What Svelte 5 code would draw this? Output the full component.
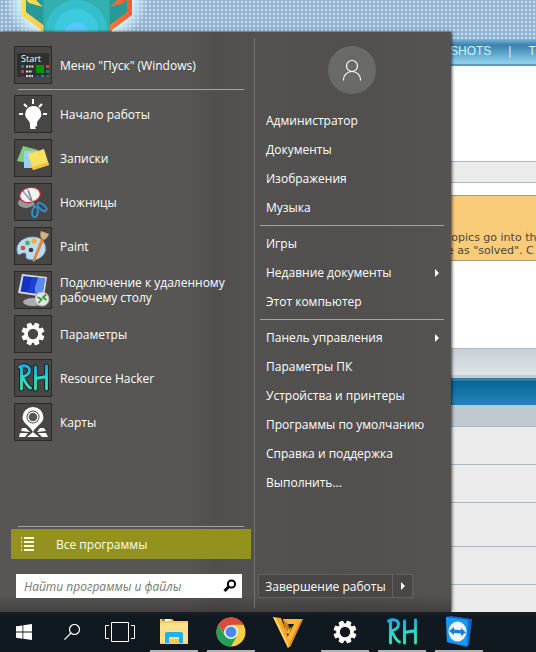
<script>
  const programs = [
    { id: 'tips', label: 'Начало работы' },
    { id: 'notes', label: 'Записки' },
    { id: 'snip', label: 'Ножницы' },
    { id: 'paint', label: 'Paint' },
    { id: 'rdp', label: 'Подключение к удаленному рабочему столу' },
    { id: 'gear', label: 'Параметры' },
    { id: 'rh', label: 'Resource Hacker' },
    { id: 'maps', label: 'Карты' }
  ];
  const places = [
    [{ label: 'Администратор' }, { label: 'Документы' }, { label: 'Изображения' }, { label: 'Музыка' }],
    [{ label: 'Игры' }, { label: 'Недавние документы', sub: true }, { label: 'Этот компьютер' }],
    [
      { label: 'Панель управления', sub: true },
      { label: 'Параметры ПК' },
      { label: 'Устройства и принтеры' },
      { label: 'Программы по умолчанию' },
      { label: 'Справка и поддержка' },
      { label: 'Выполнить...' }
    ]
  ];
  const pinned = [
    { id: 'explorer', name: 'Проводник', open: true },
    { id: 'chrome', name: 'Google Chrome', open: true },
    { id: 'v', name: 'Freemake', open: false },
    { id: 'gear', name: 'Параметры', open: true },
    { id: 'rh', name: 'Resource Hacker', open: true },
    { id: 'tv', name: 'TeamViewer', open: true }
  ];
  const teeth = [22.5, 67.5, 112.5, 157.5, 202.5, 247.5, 292.5, 337.5];
  const rows = ['short', 'short', 'tall', 'short', 'rest'];
  let query = $state('');
</script>

{#snippet icon(id)}
  <svg class="icon" viewBox="0 0 36 36" aria-hidden="true">
    {#if id === 'start'}
      <rect x="2" y="6" width="32" height="24" fill="#303030" />
      <rect x="6" y="18" width="3" height="3" fill="#167a8c" />
      <rect x="6" y="23" width="3" height="3" fill="#c0492f" />
      <rect x="6" y="28" width="3" height="2" fill="#6a1a6c" />
      <path d="M11 19.500h8M11 24.500h6M11 29h7" stroke="#ddd" stroke-width="2" stroke-dasharray="2 .7" />
      <rect x="21" y="18" width="8" height="8" fill="#009500" />
      <rect x="31" y="18" width="3" height="3" fill="#c0492f" />
      <rect x="31" y="23" width="3" height="3" fill="#167a8c" />
      <rect x="21" y="28" width="3" height="2" fill="#234e9c" />
      <rect x="26" y="28" width="3" height="2" fill="#3975c8" />
      <rect x="31" y="28" width="3" height="2" fill="#347838" />
    {:else if id === 'tips'}
      <path d="M18 10a8 8 0 0 0-5 14c1.500 1.500 2 3 2 5v3q0 1 1 1h5l-1-2 2-1v-2l0-1c0-1 .5-2 1.500-3A8 8 0 0 0 18 10z" fill="#fff" />
      <path d="M18 3v5M9 8l3 3M27 8l-3 3M4 18h4M28 18h4" stroke="#fff" stroke-width="2" />
    {:else if id === 'notes'}
      <path d="M8 6l15 4-5 14-16-3z" fill="#7fce7b" />
      <path d="M9 11h12v17H9z" fill="#9dcdf0" />
      <path d="M13 14l16-5 5 16-16 5z" fill="#f9e060" />
      <path d="M18 30l16-5-1-3-16 5z" fill="#eec63c" />
    {:else if id === 'snip'}
      <ellipse cx="11" cy="19" rx="8" ry="5" fill="#999" />
      <ellipse cx="15" cy="11" rx="10.500" ry="7.500" fill="#f3f4f8" stroke="#c9262c" stroke-width="1.300" transform="rotate(-12 15 11)" />
      <path d="M8 7l12 15M13 6l6 17" stroke="#7b8488" stroke-width="1.500" />
      <path d="M9 8l10 13" stroke="#dfe4e6" stroke-width=".8" stroke-dasharray="1 1" />
      <ellipse cx="20" cy="28" rx="2.800" ry="5" fill="none" stroke="#2f8fd0" stroke-width="2" transform="rotate(8 20 28)" />
      <ellipse cx="27" cy="23" rx="2.600" ry="5.500" fill="none" stroke="#2f8fd0" stroke-width="2" transform="rotate(-48 27 23)" />
    {:else if id === 'paint'}
      <path d="M3 26C-1 16 8 9 18 9c10 0 14 8 12 15-3 7-11 9-17 7-4-1 0-5-3-6s-4 2-7 1z" fill="#b9daf0" stroke="#7fb2d6" stroke-width=".8" />
      <circle cx="8" cy="20" r="2.300" fill="#d84a3e" />
      <circle cx="12.500" cy="15" r="2.400" fill="#58b055" />
      <circle cx="19" cy="13" r="2.600" fill="#edb02f" />
      <circle cx="16" cy="22" r="2.300" fill="#343e46" />
      <path d="M26 11l3 1-9 21-2 1 0-3z" fill="#e0872f" />
      <path d="M26 10c-1-3-1-4 0-7l8 3c-1 3-3 5-5 6z" fill="#d6b083" />
    {:else if id === 'rdp'}
      <ellipse cx="18" cy="30" rx="10" ry="4" fill="#aaaeb0" />
      <path d="M7 2l25 3-3 20L3 21z" fill="#d6dade" />
      <path d="M8.500 4l21.500 2.500-2.500 16L5.500 19.500z" fill="#1432c8" />
      <path d="M17 5l13 1.500-2.500 16-7-1z" fill="#5a8cec" />
      <path d="M17 5l6 .7-5 15.500-5-.7z" fill="#2040d0" />
      <circle cx="27" cy="27" r="7" fill="#e3e6e3" stroke="#b0b5b0" />
      <path d="M22.500 25l4 2.500-3 3.500M31 22.500l-3 3 3.500 2.500" fill="none" stroke="#3a9a3a" stroke-width="1.800" />
    {:else if id === 'gear'}
      {#each teeth as a}
        <rect x="15.500" y="6.500" width="5" height="6" rx="1" fill="#fff" transform="rotate({a} 18 18)" />
      {/each}
      <circle cx="18" cy="18" r="7" fill="none" stroke="#fff" stroke-width="3.600" />
    {:else if id === 'rh'}
      <defs>
        <linearGradient id="sea" x1="0" y1="0" x2="0" y2="36" gradientUnits="userSpaceOnUse">
          <stop offset=".1" stop-color="#16a8f0" />
          <stop offset=".5" stop-color="#2cd8cc" />
          <stop offset=".9" stop-color="#48e69a" />
        </linearGradient>
      </defs>
      {#each ['#08262c', 'url(#sea)'] as c, i}
        <path d="M6.500 7v22M4.500 7C9 4.500 14.500 6 14.500 10s-3 6-7.500 7c3 3 4 9 8.500 11M20.500 7v22M31.500 6v23M20.500 18.500l11-2" fill="none" stroke={c} stroke-width={i ? 2.8 : 4.8} stroke-linecap="round" stroke-linejoin="round" />
      {/each}
    {:else if id === 'maps'}
      <path d="M18 3a10.500 10.500 0 0 0-10.500 10.500C7.500 19 14 21 18 28c4-7 10.500-9 10.500-14.500A10.500 10.500 0 0 0 18 3z" fill="#fff" />
      <circle cx="18" cy="13" r="6.500" fill="#474644" />
      <circle cx="18" cy="13" r="4.900" fill="#555" stroke="#fff" stroke-width="1.300" />
      <path d="M7 24h4l4 4-9-1zM25 24h4l2 3-9 1zM5 29l8 0-3 4H4zM23 29l8 0 2 4h-6zM12 33l6-5 6 5z" fill="#fff" />
    {:else if id === 'explorer'}
      <path d="M4 5h12l2 2h14v23H4z" fill="#f5cc55" />
      <path d="M4 9h28v20H4z" fill="#fde18a" />
      <path d="M6 5h8v2H6z" fill="#fff" />
      <path d="M6 5h3v2H6z" fill="#58a84a" />
      <path d="M9 29V20q0-2 2-2h14q2 0 2 2v9h-4v-6H13v6z" fill="#24aeea" />
      <path d="M13 25h10v4H13z" fill="#f5cc55" />
    {:else if id === 'chrome'}
      <circle cx="18" cy="18" r="14.500" fill="#fbcf3f" />
      <path d="M5.400 10.800A14.500 14.500 0 0 0 18 32.500L24.200 21.600 18 18 11.800 21.600z" fill="#1fa15d" />
      <path d="M5.400 10.800A14.500 14.500 0 0 1 30.600 10.800H18L12 21z" fill="#dc4a3c" />
      <circle cx="18" cy="18" r="7" fill="#f4f4f4" />
      <circle cx="18" cy="18" r="5.400" fill="#4a89ee" />
    {:else if id === 'v'}
      <path d="M3 3l8 1 7 19 2 9-2 2z" fill="#f8a828" />
      <path d="M3 3l3 1 13 28-1 2z" fill="#ffd463" />
      <path d="M13 5l20 0-13 28-3-9 7-14h-6l1 5 3-3-3 8-3-1z" fill="#ffb433" />
      <path d="M13 5l5 5 1 5-2 3z" fill="#d67814" />
      <path d="M33 5l-2 0-12 26 1 2z" fill="#e08a1c" />
    {:else if id === 'tv'}
      <path d="M5 3l5-1 21 3-3 26-3 2L6 28z" fill="#1268c8" />
      <path d="M5 3l22 3-1 26L6 28z" fill="#1a98f4" />
      <ellipse cx="16.500" cy="17.500" rx="9" ry="10" fill="#eef5fb" />
      <path d="M8 17l5-4v2.500l7 .7V14l5 4.500-5 3.500v-2.500l-7-.5V21z" fill="#1580de" />
    {/if}
  </svg>
{/snippet}

<div class="screen">
  <main class="forum">
    <header class="banner">
      <svg class="emblem" viewBox="0 0 160 40" aria-hidden="true">
        <defs>
          <linearGradient id="rim" x1="0" x2="1" y1="0" y2="0">
            <stop offset="0" stop-color="#ffe04e" />
            <stop offset="1" stop-color="#ea6034" />
          </linearGradient>
          <radialGradient id="glow">
            <stop offset=".75" stop-color="#d6f2fb" />
            <stop offset="1" stop-color="#d6f2fb" stop-opacity="0" />
          </radialGradient>
        </defs>
        <ellipse cx="76.500" cy="0" rx="72" ry="52" fill="url(#glow)" />
        <path d="M21-4v19l20 15v10h71V30l20-15V-4z" fill="url(#rim)" />
        <path d="M26-4v16l20 15v13h61V27l20-15V-4z" fill="#279a98" />
        <circle cx="76.500" cy="10" r="42" fill="#32b0b0" clip-path="inset(0 9px 0 9px)" />
        <circle cx="76.500" cy="31" r="31" fill="#34bfca" />
        <circle cx="76.500" cy="31" r="22" fill="#3ccade" />
        <circle cx="76.500" cy="34" r="12" fill="#55c8f6" />
        <path d="M26-1h9l8 8-14-4zM127-1h-9l-8 8 14-4z" fill="url(#rim)" />
      </svg>
    </header>
    <nav class="tabs">
      <a href="#shots">SHOTS</a><span>|</span><a href="#themes">TH</a>
    </nav>
    <div class="strip"></div>
    <p class="notice">topics go into th<br />e as "solved". C</p>
    <div class="cap"></div>
    <div class="bar"></div>
    <div class="sub"></div>
    {#each rows as r}<div class="row {r}"></div>{/each}
  </main>

  <section class="menu" aria-label="Меню Пуск">
    <div class="left">
      <a class="app" href="#start">
        <span class="box first">{@render icon('start')}<small>Start</small></span>
        <span>Меню "Пуск" (Windows)</span>
      </a>
      <hr />
      {#each programs as p}
        <a class="app" href="#{p.id}">
          <span class="box">{@render icon(p.id)}</span>
          <span>{p.label}</span>
        </a>
      {/each}
      <hr class="low" />
      <button class="all" type="button">
        <svg viewBox="0 0 14 14" aria-hidden="true">
          <path d="M0 1h1M0 5h1M0 9h1M0 13h1" stroke="#fffbd8" stroke-width="1.500" />
          <path d="M3 1h10M3 5h10M3 9h10M3 13h10" stroke="#fffbd8" stroke-width="2" />
        </svg>
        Все программы
      </button>
      <form class="search" onsubmit={(e) => e.preventDefault()}>
        <input type="text" aria-label="Найти программы и файлы" placeholder="Найти программы и файлы" bind:value={query} />
        <button type="submit" aria-label="Найти">
          <svg viewBox="0 0 14 14" aria-hidden="true">
            <circle cx="8.500" cy="5" r="3.600" fill="none" stroke="#000" stroke-width="2" />
            <path d="M6 7.500L1.500 12" stroke="#000" stroke-width="3" />
          </svg>
        </button>
      </form>
    </div>
    <div class="right">
      <button class="avatar" type="button" aria-label="Администратор">
        <svg viewBox="0 0 20 22" aria-hidden="true">
          <circle cx="10" cy="7" r="5.500" />
          <path d="M1.500 21.500v-1a8.500 8 0 0 1 17 0v1" />
        </svg>
      </button>
      {#each places as group, i}
        {#if i}<hr />{/if}
        {#each group as item}
          <a class="place" href="#place">{item.label}{#if item.sub}<i class="arrow"></i>{/if}</a>
        {/each}
      {/each}
      <div class="power">
        <button type="button">Завершение работы</button>
        <button class="more" type="button" aria-label="Ещё"><i class="arrow"></i></button>
      </div>
    </div>
  </section>

  <footer class="taskbar">
    <button type="button" aria-label="Пуск">
      <svg class="glyph" viewBox="0 0 16 16" aria-hidden="true">
        <path d="M0 2.300L6.500 1.400V7.600H0zM7.300 1.300L16 0v7.600H7.300zM0 8.400h6.500v6.300L0 13.800zM7.300 8.400H16V16l-8.700-1.200z" fill="#fff" />
      </svg>
    </button>
    <button type="button" aria-label="Поиск">
      <svg class="glyph" viewBox="0 0 16 16" aria-hidden="true">
        <g fill="none" stroke="#fff" stroke-width="1.200"><circle cx="10.500" cy="5.500" r="5" /><path d="M7 9L.4 15.600" /></g>
      </svg>
    </button>
    <button type="button" aria-label="Представление задач">
      <svg class="wide" viewBox="0 0 30 20" aria-hidden="true">
        <path d="M6.500.5h17v19h-17zM4 3.500H.5v13H4M26 3.500h3.500v13H26" fill="none" stroke="#fff" />
      </svg>
    </button>
    <div class="pins">
      {#each pinned as p}
        <button type="button" class:open={p.open} aria-label={p.name}>{@render icon(p.id)}</button>
      {/each}
    </div>
  </footer>
</div>

<style>
  :global(body) {
    margin: 0;
  }
  .screen {
    display: grid;
    grid-template-columns: minmax(0, 1fr);
    grid-template-rows: 1fr 40px;
    min-height: 100vh;
    font: 12px/15px 'Open Sans', 'Noto Sans', sans-serif;
    color: #fff;
  }
  .screen * {
    box-sizing: border-box;
  }
  a {
    color: inherit;
    text-decoration: none;
  }
  button {
    font: inherit;
    color: inherit;
    border: 0;
    padding: 0;
    background: none;
  }
  .forum,
  .menu {
    grid-area: 1 / 1;
  }
  .forum {
    display: flex;
    flex-direction: column;
    background: #fff;
    overflow: hidden;
  }
  .banner {
    height: 39px;
    overflow: hidden;
    background: radial-gradient(circle, #c9dbea 0, #c9dbea 30%, #8fb2d2 60%) 0 0 / 4px 4px;
  }
  .emblem {
    display: block;
    width: 160px;
    height: 40px;
  }
  .tabs {
    display: flex;
    gap: 17px;
    height: 27px;
    padding-left: 450px;
    font: 12px/25px 'Liberation Sans', sans-serif;
    color: #d8f3fc;
    background: linear-gradient(#7db6d6, #3a80ae 25%, #5fa9cd 60%, #8ccde8 90%);
    border-bottom: 2px solid #5d9cc0;
  }
  .strip {
    height: 22px;
    margin-top: 95px;
    background: #ebebeb;
    border: solid #a9b8c2;
    border-width: 1px 0;
  }
  .notice {
    height: 66px;
    margin: 12px 0 87px;
    padding: 35px 0 0 447px;
    font: 11px/13px 'DejaVu Sans', sans-serif;
    color: #4c4836;
    white-space: nowrap;
    background: #f9cc79;
    border: solid #a9987a;
    border-width: 1px 0;
  }
  .cap {
    height: 30px;
    background: linear-gradient(#c6d0d9, #e0e4e8);
    border-top: 1px solid #a9b8c2;
    border-bottom: 3px solid #c3ccd3;
  }
  .bar {
    height: 27px;
    background: linear-gradient(#06679b, #2583b5);
    border-top: 3px solid #2f7fa8;
  }
  .sub {
    height: 22px;
    background: #c0c8d0;
    border-bottom: 1px solid #a9b8c2;
  }
  .row {
    height: 38px;
    background: #ebebeb;
    border-bottom: 1px solid #a9b8c2;
  }
  .row.tall {
    height: 44px;
  }
  .row.rest {
    flex: 1;
    border: 0;
  }
  .menu {
    z-index: 1;
    display: flex;
    width: min(451px, 100%);
    margin-top: 32px;
    background:
      linear-gradient(transparent 97%, rgba(30, 30, 30, 0.35)),
      linear-gradient(90deg, #575654 42%, #504f4d 48%, #535250 56%, #51504e 75%, #545351);
    box-shadow: 1px 0 3px rgba(0, 0, 0, 0.7);
  }
  .left {
    display: flex;
    flex-direction: column;
    width: 254px;
    padding: 14px 0;
  }
  hr {
    width: 226px;
    height: 1px;
    margin: 5px 0 5px 18px;
    border: 0;
    background: #a3a3a1;
  }
  .app {
    display: flex;
    align-items: center;
    gap: 8px;
    height: 38px;
    padding: 0 16px 0 14px;
    margin-bottom: 6px;
  }
  .app:first-child {
    margin-bottom: 0;
  }
  .box {
    flex: none;
    position: relative;
    width: 38px;
    height: 38px;
    background: #474644;
    border: 1px solid #2b2a29;
  }
  .box small {
    position: absolute;
    left: 6px;
    top: 6px;
    font-size: 9px;
    line-height: 12px;
  }
  .icon {
    display: block;
    width: 36px;
    height: 36px;
  }
  hr.low {
    margin-top: auto;
    margin-bottom: 2px;
  }
  .all {
    display: flex;
    align-items: center;
    gap: 21px;
    width: 240px;
    height: 30px;
    margin: 0 0 15px 11px;
    padding-left: 10px;
    background: #94921f;
    color: #fffde8;
  }
  .all svg,
  .search svg {
    display: block;
    width: 14px;
    height: 14px;
  }
  .search {
    display: flex;
    width: 226px;
    height: 24px;
    margin-left: 16px;
    background: #fff;
  }
  .search input {
    flex: 1;
    min-width: 0;
    padding: 0 0 0 8px;
    border: 0;
    outline: 0;
    background: none;
    color: #333;
    font: italic 12px/15px 'Open Sans', 'Noto Sans', sans-serif;
  }
  .search input::placeholder {
    color: #777;
    opacity: 1;
  }
  .search button {
    padding: 0 5px;
  }
  .right {
    flex: 1;
    display: flex;
    flex-direction: column;
    margin: 6px 0 4px;
    padding: 8px 7px 10px 5px;
    border-left: 1px solid #73726f;
  }
  .right hr {
    width: auto;
    margin: 3px 0;
  }
  .avatar {
    display: grid;
    place-items: center;
    align-self: center;
    width: 48px;
    height: 48px;
    margin-bottom: 12px;
    border-radius: 50%;
    background: #6a6a69;
  }
  .avatar svg {
    width: 20px;
    height: 22px;
    fill: none;
    stroke: #fff;
    stroke-width: 1.2;
  }
  .place {
    display: flex;
    align-items: center;
    justify-content: space-between;
    height: 29px;
    padding: 0 5px 0 6px;
  }
  .arrow {
    border: solid transparent;
    border-width: 4px 0 4px 4px;
    border-left-color: #fff;
  }
  .power {
    display: flex;
    height: 24px;
    width: 155px;
    margin: auto 0 0 -2px;
    background: #484745;
    border: 1px solid #62615f;
  }
  .power button {
    flex: 1;
    white-space: nowrap;
  }
  .power .more {
    flex: none;
    display: grid;
    place-items: center;
    width: 20px;
    border-left: 1px solid #62615f;
  }
  .taskbar {
    position: relative;
    z-index: 2;
    display: flex;
    background: linear-gradient(#1a1f24, #101820 12%);
  }
  .taskbar button {
    display: grid;
    place-items: center;
    width: 48px;
    height: 40px;
  }
  .glyph {
    width: 16px;
    height: 16px;
  }
  .wide {
    width: 30px;
    height: 20px;
  }
  .pins {
    display: flex;
    gap: 9px;
    margin-left: 6px;
  }
  .open {
    box-shadow: inset 0 -2px #b5b1af;
  }
</style>
